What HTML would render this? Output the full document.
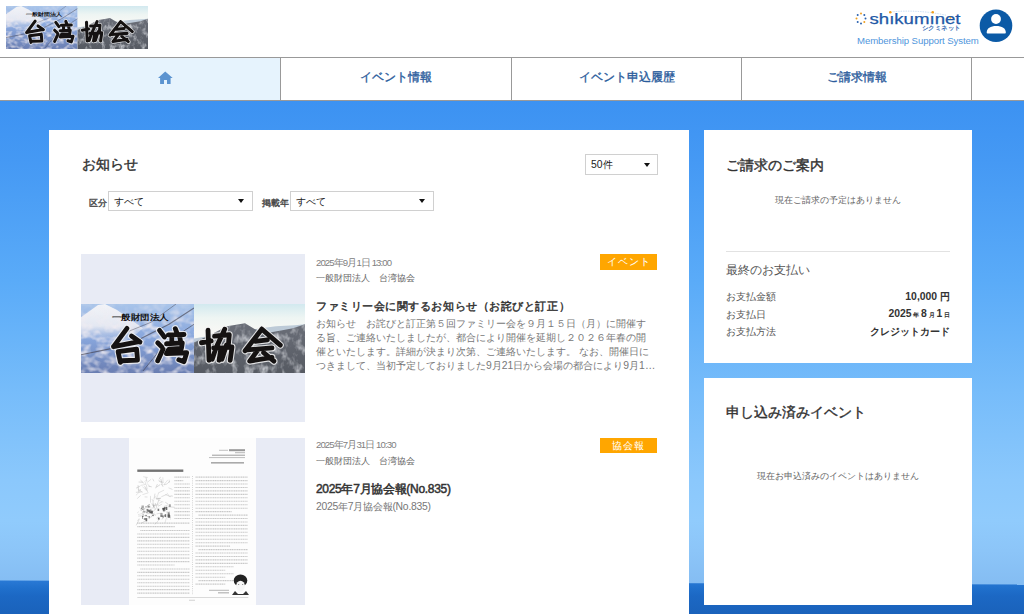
<!DOCTYPE html>
<html lang="ja">
<head>
<meta charset="utf-8">
<style>
*{box-sizing:border-box;margin:0;padding:0}
html,body{width:1024px;height:614px;overflow:hidden}
body{font-family:"Liberation Sans",sans-serif;background:#fff;position:relative;color:#333}
.abs{position:absolute}
#header{left:0;top:0;width:1024px;height:57px;background:#fff}
#nav{left:0;top:57px;width:1024px;height:44px;background:#fff;border-top:1px solid #999999;border-bottom:1px solid #999999}
.navc{position:absolute;top:0;height:42px;border-left:1px solid #999999;text-align:center;color:#2b5c9c;font-size:12px;font-weight:normal;-webkit-text-stroke:0.35px #2b5c9c;line-height:38px}
#bg{left:0;top:101px;width:1024px;height:513px;background:linear-gradient(to bottom,#3c92f2 0px,#4599f4 60px,#5aabf8 180px,#76bcfa 290px,#8bc8fc 380px,#90cbfc 420px,#8cc5f8 450px,#84bcf2 485px)}
#ocean{left:0;top:101px;width:1024px;height:513px;clip-path:polygon(0 479.5px,1024px 483.5px,1024px 513px,0 513px);background:linear-gradient(to bottom,#2a7ad6 479px,#2070cc 487px,#1c68c4 495px,#1a62bb 513px)}
.card{position:absolute;background:#fff}
.h{font-size:13.8px;font-weight:normal;-webkit-text-stroke:0.4px #333;color:#333;position:absolute;white-space:nowrap}
.sel{position:absolute;border:1px solid #d0d0d0;background:#fff;font-size:10.4px;color:#222}
.sel .t{position:absolute;left:5px;top:3px;white-space:nowrap}
.sel .tri{position:absolute;width:0;height:0;border-left:3.5px solid transparent;border-right:3.5px solid transparent;border-top:4px solid #111}
.lbl{position:absolute;font-size:9px;color:#444;font-weight:normal;-webkit-text-stroke:0.35px #444;white-space:nowrap}
.txt{position:absolute;white-space:nowrap}
</style>
</head>
<body>
<div id="header" class="abs">
  <div id="logo" class="abs" style="left:6px;top:6px;width:142px;height:43px;overflow:hidden"><svg width="100%" height="100%" viewBox="0 0 224 68" preserveAspectRatio="none">
<defs>
<linearGradient id="lsky_logo" x1="0" y1="0" x2="0" y2="1"><stop offset="0" stop-color="#a8c4ea"/><stop offset="0.5" stop-color="#88a6dc"/><stop offset="1" stop-color="#6a7eb2"/></linearGradient>
<linearGradient id="fuji_logo" x1="0" y1="0" x2="0" y2="1"><stop offset="0" stop-color="#f2f4f8"/><stop offset="0.6" stop-color="#e4e8f2"/><stop offset="1" stop-color="#c8d2e8" stop-opacity="0"/></linearGradient>
<linearGradient id="bmg_logo" x1="0" y1="0" x2="0" y2="1"><stop offset="0" stop-color="#fff" stop-opacity="0.2"/><stop offset="0.35" stop-color="#fff" stop-opacity="0.9"/><stop offset="1" stop-color="#fff" stop-opacity="0.8"/></linearGradient>
<mask id="bm_logo"><rect x="0" y="0" width="113" height="68" fill="url(#bmg_logo)"/></mask>
<linearGradient id="rsky_logo" x1="0" y1="0" x2="0" y2="1"><stop offset="0" stop-color="#d2e9ef"/><stop offset="0.2" stop-color="#eef5f3"/><stop offset="0.4" stop-color="#f8f8f5"/></linearGradient>
<linearGradient id="mtn_logo" x1="0" y1="0" x2="0" y2="1"><stop offset="0" stop-color="#6a6e78"/><stop offset="1" stop-color="#565a62"/></linearGradient>
<filter id="blos_logo" x="0" y="0" width="100%" height="100%">
<feTurbulence type="fractalNoise" baseFrequency="0.11 0.15" numOctaves="2" seed="7" result="n"/>
<feColorMatrix in="n" type="matrix" values="0 0 0 0 0.88  0 0 0 0 0.84  0 0 0 0 0.88  2.6 0 0 0 -1.05"/>
<feComposite in2="SourceGraphic" operator="in"/>
</filter>
<filter id="rock_logo" x="0" y="0" width="100%" height="100%">
<feTurbulence type="fractalNoise" baseFrequency="0.14 0.1" numOctaves="3" seed="5" result="n"/>
<feColorMatrix in="n" type="matrix" values="0 0 0 0 0.74  0 0 0 0 0.76  0 0 0 0 0.8  2.4 0 0 0 -1.1"/>
<feComposite in2="SourceGraphic" operator="in"/>
</filter>
<clipPath id="mclip_logo"><path d="M113,38 L130,30 L146,22 L158,20 L164,19 L174,25 L186,28.5 L200,26 L212,24 L224,20 L224,68 L113,68 Z"/></clipPath>
</defs>
<rect x="0" y="0" width="113" height="68" fill="url(#lsky_logo)"/>
<path d="M0,13 L17,1 L24,0 L36,6 L62,24 L50,34 L20,36 L0,34 Z" fill="url(#fuji_logo)"/>
<rect x="0" y="0" width="113" height="68" fill="#fff" filter="url(#blos_logo)" mask="url(#bm_logo)"/>
<g stroke="#3e3a44" fill="none" opacity="0.6">
<path d="M113,4 L88,20 L60,34 L30,44 L0,50" stroke-width="1.1"/><path d="M113,20 L85,38 L62,66" stroke-width="0.9"/><path d="M95,0 L70,18 L40,30" stroke-width="0.7"/>
</g>
<rect x="113" y="0" width="111" height="68" fill="url(#rsky_logo)"/>
<path d="M113,34 L125,32 L150,28 L180,24 L195,22 L214,21 L224,20 L224,68 L113,68 Z" fill="#8ea6c0" opacity="0.55"/>
<path d="M113,38 L130,30 L146,22 L158,20 L164,19 L174,25 L186,28.5 L200,26 L212,24 L224,20 L224,68 L113,68 Z" fill="url(#mtn_logo)"/>
<rect x="113" y="0" width="111" height="68" fill="#fff" filter="url(#rock_logo)" clip-path="url(#mclip_logo)" opacity="0.8"/>
<text x="31" y="15.5" font-size="8" font-weight="bold" fill="#111" font-family="Liberation Sans, sans-serif" textLength="57" lengthAdjust="spacingAndGlyphs">一般財団法人</text>
<g fill="none" stroke-linecap="round" stroke-linejoin="round">
<g stroke="#f4f4f4" stroke-width="7" opacity="0.85">
<path d="M46,24 L32.5,42 M32.5,42 L58,37 M50.5,31.5 L59,37.5 M37.2,47.5 L39.4,57.5 M37.2,47 L55.6,44.5 L56.5,55 M40.7,55.9 L56.5,55.3"/>
<path d="M78.5,26 L83.5,32.5 M76.7,38.3 L81,42.5 M76.7,55.9 L82,44.5 M94.3,24.3 L96,28.7 M87.3,30.4 L103,30 M90.8,32.2 L90.8,36.6 M98.7,32.2 L99.6,36.6 M85.5,39.2 L101.3,38.3 L100.5,43.6 M88.1,44.5 L100.5,43.8 M87.3,45.4 L85.5,48.9 L105.7,48 L103,56.8 L97.8,55"/>
<path d="M120.5,38.2 L130.2,36.4 M127,25.7 L128,55.4 M143.7,24.8 L136.3,40.5 M133.5,31.7 L148.3,30.3 L147.4,39.6 M132.6,43.3 L140,43.3 L138.1,55.4 M135.3,42.4 L131.2,54.5 M141.8,43.3 L151,42.4 L149.2,55.4 M145.5,40.5 L140.9,54.5"/>
<path d="M180.8,24.8 L164.1,46.1 M180.8,24.8 L199.3,40.5 M174.3,36.8 L186.4,35.4 M166,45.2 L191,43.3 M177,45.2 L168.7,56.3 L191,52.6 M182.6,48 L192.9,56.3"/>
</g>
<g stroke="#151212" stroke-width="4.8">
<path d="M46,24 L32.5,42 M32.5,42 L58,37 M50.5,31.5 L59,37.5 M37.2,47.5 L39.4,57.5 M37.2,47 L55.6,44.5 L56.5,55 M40.7,55.9 L56.5,55.3"/>
<path d="M78.5,26 L83.5,32.5 M76.7,38.3 L81,42.5 M76.7,55.9 L82,44.5 M94.3,24.3 L96,28.7 M87.3,30.4 L103,30 M90.8,32.2 L90.8,36.6 M98.7,32.2 L99.6,36.6 M85.5,39.2 L101.3,38.3 L100.5,43.6 M88.1,44.5 L100.5,43.8 M87.3,45.4 L85.5,48.9 L105.7,48 L103,56.8 L97.8,55"/>
<path d="M120.5,38.2 L130.2,36.4 M127,25.7 L128,55.4 M143.7,24.8 L136.3,40.5 M133.5,31.7 L148.3,30.3 L147.4,39.6 M132.6,43.3 L140,43.3 L138.1,55.4 M135.3,42.4 L131.2,54.5 M141.8,43.3 L151,42.4 L149.2,55.4 M145.5,40.5 L140.9,54.5"/>
<path d="M180.8,24.8 L164.1,46.1 M180.8,24.8 L199.3,40.5 M174.3,36.8 L186.4,35.4 M166,45.2 L191,43.3 M177,45.2 L168.7,56.3 L191,52.6 M182.6,48 L192.9,56.3"/>
</g>
</g>
</svg></div>
  <svg class="abs" style="left:850px;top:4px" width="120" height="30" viewBox="0 0 120 30">
<g><circle cx="11" cy="9.5" r="1" fill="#f0a020"/><circle cx="14.3" cy="11" r="1" fill="#2b63b0"/><circle cx="15.5" cy="14.5" r="1" fill="#2b63b0"/><circle cx="14.3" cy="18" r="1" fill="#f0a020"/><circle cx="11" cy="19.5" r="1" fill="#2b63b0"/><circle cx="7.7" cy="18" r="1" fill="#2b63b0"/><circle cx="6.5" cy="14.5" r="1" fill="#f0a020"/><circle cx="7.7" cy="11" r="1" fill="#2b63b0"/></g>
<path d="M42.7,7.8 Q70,5.5 96.4,11.3" stroke="#9cc0e8" stroke-width="0.7" stroke-dasharray="0.8 0.9" fill="none"/>
<text x="19.5" y="19.8" font-family="Liberation Sans, sans-serif" font-size="14.5" font-weight="normal" fill="#2158a6" stroke="#2158a6" stroke-width="0.25" stroke-linejoin="round" textLength="91" lengthAdjust="spacingAndGlyphs">sh&#305;kum&#305;net</text>
<circle cx="40.3" cy="8.3" r="1.3" fill="#f0a020"/><circle cx="82.7" cy="8.3" r="1.3" fill="#f0a020"/><circle cx="100.3" cy="13.7" r="0.9" fill="#f0a020"/>
<text x="71.5" y="26.2" font-family="Liberation Sans, sans-serif" font-size="5.5" font-weight="bold" fill="#2b63b0" textLength="39" lengthAdjust="spacingAndGlyphs">シクミネット</text>
</svg>
  <div class="abs" style="left:857px;top:35px;font-size:9.6px;letter-spacing:-0.08px;color:#5096dc;white-space:nowrap">Membership Support System</div>
  <svg class="abs" style="left:978px;top:8px" width="36" height="36" viewBox="0 0 36 36"><circle cx="18" cy="17.7" r="16.3" fill="#0b5aa6"/><circle cx="18" cy="11" r="4.9" fill="#fff"/><path d="M8.7,24.6 C8.7,20.2 12.5,18 18.2,18 C24,18 27.8,20.2 27.8,24.6 L27.8,24.8 Q27.8,25.5 27,25.5 L9.5,25.5 Q8.7,25.5 8.7,24.8 Z" fill="#fff"/></svg>
</div>
<div id="nav" class="abs">
  <div class="navc" style="left:49px;width:231px;background:#e6f3fd"><svg class="abs" style="left:107px;top:11.5px" width="16" height="14" viewBox="0 0 16 14"><path d="M8.25,1.4 L15.7,7.9 L13.6,7.9 L13.6,13.9 L10,13.9 L10,10 L7,10 L7,13.9 L3.1,13.9 L3.1,7.9 L1,7.9 Z" fill="#5b93d0"/></svg></div>
  <div class="navc" style="left:280px;width:231px">イベント情報</div>
  <div class="navc" style="left:511px;width:230px">イベント申込履歴</div>
  <div class="navc" style="left:741px;width:230px">ご請求情報</div>
  <div class="navc" style="left:971px;width:53px"></div>
</div>
<div id="bg" class="abs"></div><div id="ocean" class="abs"></div>

<!-- main card -->
<div class="card" style="left:49px;top:130px;width:640px;height:484px">
  <div class="h" style="left:33px;top:26px">お知らせ</div>
  <div class="sel" style="left:536px;top:24px;width:73px;height:21px"><span class="t">50件</span><span class="tri" style="left:58px;top:8px"></span></div>
  <div class="lbl" style="left:40px;top:67px">区分</div>
  <div class="sel" style="left:59px;top:61px;width:145px;height:20px"><span class="t">すべて</span><span class="tri" style="left:129px;top:7px"></span></div>
  <div class="lbl" style="left:213px;top:67px">掲載年</div>
  <div class="sel" style="left:241px;top:61px;width:144px;height:20px"><span class="t">すべて</span><span class="tri" style="left:128px;top:7px"></span></div>
  <!-- item 1 -->
  <div class="abs" style="left:32px;top:124px;width:224px;height:168px;background:#e8ebf5">
    <div id="banner2" class="abs" style="left:0;top:50px;width:224px;height:69px;overflow:hidden"><svg width="100%" height="100%" viewBox="0 0 224 68" preserveAspectRatio="none">
<defs>
<linearGradient id="lsky_banner2" x1="0" y1="0" x2="0" y2="1"><stop offset="0" stop-color="#a8c4ea"/><stop offset="0.5" stop-color="#88a6dc"/><stop offset="1" stop-color="#6a7eb2"/></linearGradient>
<linearGradient id="fuji_banner2" x1="0" y1="0" x2="0" y2="1"><stop offset="0" stop-color="#f2f4f8"/><stop offset="0.6" stop-color="#e4e8f2"/><stop offset="1" stop-color="#c8d2e8" stop-opacity="0"/></linearGradient>
<linearGradient id="bmg_banner2" x1="0" y1="0" x2="0" y2="1"><stop offset="0" stop-color="#fff" stop-opacity="0.2"/><stop offset="0.35" stop-color="#fff" stop-opacity="0.9"/><stop offset="1" stop-color="#fff" stop-opacity="0.8"/></linearGradient>
<mask id="bm_banner2"><rect x="0" y="0" width="113" height="68" fill="url(#bmg_banner2)"/></mask>
<linearGradient id="rsky_banner2" x1="0" y1="0" x2="0" y2="1"><stop offset="0" stop-color="#d2e9ef"/><stop offset="0.2" stop-color="#eef5f3"/><stop offset="0.4" stop-color="#f8f8f5"/></linearGradient>
<linearGradient id="mtn_banner2" x1="0" y1="0" x2="0" y2="1"><stop offset="0" stop-color="#6a6e78"/><stop offset="1" stop-color="#565a62"/></linearGradient>
<filter id="blos_banner2" x="0" y="0" width="100%" height="100%">
<feTurbulence type="fractalNoise" baseFrequency="0.11 0.15" numOctaves="2" seed="7" result="n"/>
<feColorMatrix in="n" type="matrix" values="0 0 0 0 0.88  0 0 0 0 0.84  0 0 0 0 0.88  2.6 0 0 0 -1.05"/>
<feComposite in2="SourceGraphic" operator="in"/>
</filter>
<filter id="rock_banner2" x="0" y="0" width="100%" height="100%">
<feTurbulence type="fractalNoise" baseFrequency="0.14 0.1" numOctaves="3" seed="5" result="n"/>
<feColorMatrix in="n" type="matrix" values="0 0 0 0 0.74  0 0 0 0 0.76  0 0 0 0 0.8  2.4 0 0 0 -1.1"/>
<feComposite in2="SourceGraphic" operator="in"/>
</filter>
<clipPath id="mclip_banner2"><path d="M113,38 L130,30 L146,22 L158,20 L164,19 L174,25 L186,28.5 L200,26 L212,24 L224,20 L224,68 L113,68 Z"/></clipPath>
</defs>
<rect x="0" y="0" width="113" height="68" fill="url(#lsky_banner2)"/>
<path d="M0,13 L17,1 L24,0 L36,6 L62,24 L50,34 L20,36 L0,34 Z" fill="url(#fuji_banner2)"/>
<rect x="0" y="0" width="113" height="68" fill="#fff" filter="url(#blos_banner2)" mask="url(#bm_banner2)"/>
<g stroke="#3e3a44" fill="none" opacity="0.6">
<path d="M113,4 L88,20 L60,34 L30,44 L0,50" stroke-width="1.1"/><path d="M113,20 L85,38 L62,66" stroke-width="0.9"/><path d="M95,0 L70,18 L40,30" stroke-width="0.7"/>
</g>
<rect x="113" y="0" width="111" height="68" fill="url(#rsky_banner2)"/>
<path d="M113,34 L125,32 L150,28 L180,24 L195,22 L214,21 L224,20 L224,68 L113,68 Z" fill="#8ea6c0" opacity="0.55"/>
<path d="M113,38 L130,30 L146,22 L158,20 L164,19 L174,25 L186,28.5 L200,26 L212,24 L224,20 L224,68 L113,68 Z" fill="url(#mtn_banner2)"/>
<rect x="113" y="0" width="111" height="68" fill="#fff" filter="url(#rock_banner2)" clip-path="url(#mclip_banner2)" opacity="0.8"/>
<text x="31" y="15.5" font-size="8" font-weight="bold" fill="#111" font-family="Liberation Sans, sans-serif" textLength="57" lengthAdjust="spacingAndGlyphs">一般財団法人</text>
<g fill="none" stroke-linecap="round" stroke-linejoin="round">
<g stroke="#f4f4f4" stroke-width="7" opacity="0.85">
<path d="M46,24 L32.5,42 M32.5,42 L58,37 M50.5,31.5 L59,37.5 M37.2,47.5 L39.4,57.5 M37.2,47 L55.6,44.5 L56.5,55 M40.7,55.9 L56.5,55.3"/>
<path d="M78.5,26 L83.5,32.5 M76.7,38.3 L81,42.5 M76.7,55.9 L82,44.5 M94.3,24.3 L96,28.7 M87.3,30.4 L103,30 M90.8,32.2 L90.8,36.6 M98.7,32.2 L99.6,36.6 M85.5,39.2 L101.3,38.3 L100.5,43.6 M88.1,44.5 L100.5,43.8 M87.3,45.4 L85.5,48.9 L105.7,48 L103,56.8 L97.8,55"/>
<path d="M120.5,38.2 L130.2,36.4 M127,25.7 L128,55.4 M143.7,24.8 L136.3,40.5 M133.5,31.7 L148.3,30.3 L147.4,39.6 M132.6,43.3 L140,43.3 L138.1,55.4 M135.3,42.4 L131.2,54.5 M141.8,43.3 L151,42.4 L149.2,55.4 M145.5,40.5 L140.9,54.5"/>
<path d="M180.8,24.8 L164.1,46.1 M180.8,24.8 L199.3,40.5 M174.3,36.8 L186.4,35.4 M166,45.2 L191,43.3 M177,45.2 L168.7,56.3 L191,52.6 M182.6,48 L192.9,56.3"/>
</g>
<g stroke="#151212" stroke-width="4.8">
<path d="M46,24 L32.5,42 M32.5,42 L58,37 M50.5,31.5 L59,37.5 M37.2,47.5 L39.4,57.5 M37.2,47 L55.6,44.5 L56.5,55 M40.7,55.9 L56.5,55.3"/>
<path d="M78.5,26 L83.5,32.5 M76.7,38.3 L81,42.5 M76.7,55.9 L82,44.5 M94.3,24.3 L96,28.7 M87.3,30.4 L103,30 M90.8,32.2 L90.8,36.6 M98.7,32.2 L99.6,36.6 M85.5,39.2 L101.3,38.3 L100.5,43.6 M88.1,44.5 L100.5,43.8 M87.3,45.4 L85.5,48.9 L105.7,48 L103,56.8 L97.8,55"/>
<path d="M120.5,38.2 L130.2,36.4 M127,25.7 L128,55.4 M143.7,24.8 L136.3,40.5 M133.5,31.7 L148.3,30.3 L147.4,39.6 M132.6,43.3 L140,43.3 L138.1,55.4 M135.3,42.4 L131.2,54.5 M141.8,43.3 L151,42.4 L149.2,55.4 M145.5,40.5 L140.9,54.5"/>
<path d="M180.8,24.8 L164.1,46.1 M180.8,24.8 L199.3,40.5 M174.3,36.8 L186.4,35.4 M166,45.2 L191,43.3 M177,45.2 L168.7,56.3 L191,52.6 M182.6,48 L192.9,56.3"/>
</g>
</g>
</svg></div>
  </div>
  <div class="txt" style="left:267px;top:127px;font-size:9.6px;letter-spacing:-0.9px;color:#808080">2025年9月1日 13:00</div>
  <div class="txt" style="left:267px;top:143px;font-size:8.5px;color:#666">一般財団法人　台湾協会</div>
  <div class="txt" style="left:267px;top:169px;font-size:11.4px;letter-spacing:0.55px;color:#333;font-weight:normal;-webkit-text-stroke:0.45px #333">ファミリー会に関するお知らせ（お詫びと訂正）</div>
  <div class="abs" style="left:267px;top:187px;width:360px;font-size:10.4px;line-height:14px;color:#777;white-space:nowrap">お知らせ　お詫びと訂正第５回ファミリー会を９月１５日（月）に開催す<br>る旨、ご連絡いたしましたが、都合により開催を延期し２０２６年春の開<br>催といたします。詳細が決まり次第、ご連絡いたします。 なお、開催日に<br>つきまして、当初予定しておりました9月21日から会場の都合により9月1…</div>
  <div class="abs" style="left:551px;top:124px;width:57px;height:16px;background:#ffa600;color:#fff;font-size:9.6px;line-height:16px;text-align:center;letter-spacing:1px">イベント</div>
  <!-- item 2 -->
  <div class="abs" style="left:32px;top:308px;width:224px;height:167px;background:#e8ebf5">
    <div id="paper" class="abs" style="left:48px;top:0;width:127px;height:167px;overflow:hidden"><svg width="127" height="167" viewBox="0 0 127 167">
<rect width="127" height="167" fill="#fdfdfd"/>
<rect x="100" y="11.2" width="16" height="2" fill="#555" opacity="0.6"/><rect x="90" y="11.8" width="9" height="1" fill="#888" opacity="0.5"/>
<rect x="106.0" y="14.2" width="10.0" height="1.0" fill="#999" opacity="0.7"/>
<rect x="83.0" y="16.6" width="33.0" height="1.3" fill="#777" opacity="0.55"/>
<rect x="80.0" y="19.0" width="36.0" height="1.1" fill="#888" opacity="0.5"/>
<rect x="82.0" y="24.0" width="33.0" height="1.6" fill="#666" opacity="0.55"/>
<rect x="8.3" y="31.5" width="46.0" height="2.4" fill="#444" opacity="0.75"/>
<g>
<line x1="23.9" y1="62.6" x2="24.6" y2="69.2" stroke="#888" stroke-width="0.5" opacity="0.50"/>
<line x1="28.4" y1="46.1" x2="26.6" y2="50.3" stroke="#888" stroke-width="0.5" opacity="0.59"/>
<line x1="12.1" y1="51.3" x2="10.1" y2="52.7" stroke="#888" stroke-width="0.5" opacity="0.56"/>
<line x1="10.4" y1="81.2" x2="7.2" y2="87.3" stroke="#888" stroke-width="0.5" opacity="0.53"/>
<line x1="14.2" y1="38.7" x2="18.8" y2="39.5" stroke="#888" stroke-width="0.5" opacity="0.41"/>
<line x1="17.0" y1="39.3" x2="17.8" y2="43.6" stroke="#888" stroke-width="0.5" opacity="0.60"/>
<line x1="26.1" y1="66.2" x2="23.9" y2="70.1" stroke="#888" stroke-width="0.5" opacity="0.49"/>
<line x1="18.2" y1="81.9" x2="12.1" y2="85.3" stroke="#888" stroke-width="0.5" opacity="0.56"/>
<line x1="19.4" y1="48.1" x2="22.8" y2="48.9" stroke="#888" stroke-width="0.5" opacity="0.58"/>
<line x1="22.2" y1="75.2" x2="18.3" y2="75.8" stroke="#888" stroke-width="0.5" opacity="0.60"/>
<line x1="9.0" y1="47.2" x2="9.6" y2="53.7" stroke="#888" stroke-width="0.5" opacity="0.64"/>
<line x1="22.1" y1="41.2" x2="18.2" y2="44.5" stroke="#888" stroke-width="0.5" opacity="0.43"/>
<line x1="11.9" y1="52.6" x2="6.9" y2="57.3" stroke="#888" stroke-width="0.5" opacity="0.39"/>
<line x1="17.1" y1="42.4" x2="15.3" y2="43.8" stroke="#888" stroke-width="0.5" opacity="0.40"/>
<line x1="27.5" y1="57.7" x2="25.5" y2="59.9" stroke="#888" stroke-width="0.5" opacity="0.39"/>
<line x1="30.2" y1="43.1" x2="33.5" y2="45.7" stroke="#888" stroke-width="0.5" opacity="0.43"/>
<line x1="41.0" y1="73.4" x2="37.7" y2="74.6" stroke="#888" stroke-width="0.5" opacity="0.41"/>
<line x1="22.0" y1="75.6" x2="27.0" y2="77.2" stroke="#888" stroke-width="0.5" opacity="0.65"/>
<line x1="16.0" y1="49.4" x2="19.0" y2="54.4" stroke="#888" stroke-width="0.5" opacity="0.44"/>
<line x1="11.4" y1="42.0" x2="15.0" y2="45.4" stroke="#888" stroke-width="0.5" opacity="0.53"/>
<line x1="21.3" y1="57.9" x2="21.6" y2="64.7" stroke="#888" stroke-width="0.5" opacity="0.52"/>
<line x1="37.6" y1="46.0" x2="34.9" y2="46.8" stroke="#888" stroke-width="0.5" opacity="0.60"/>
<line x1="17.2" y1="46.4" x2="11.6" y2="47.4" stroke="#888" stroke-width="0.5" opacity="0.41"/>
<line x1="40.4" y1="76.8" x2="41.6" y2="81.7" stroke="#888" stroke-width="0.5" opacity="0.38"/>
<line x1="10.3" y1="80.4" x2="8.4" y2="82.9" stroke="#888" stroke-width="0.5" opacity="0.43"/>
<line x1="36.2" y1="64.2" x2="39.1" y2="66.1" stroke="#888" stroke-width="0.5" opacity="0.57"/>
<line x1="11.3" y1="48.0" x2="7.0" y2="50.2" stroke="#888" stroke-width="0.5" opacity="0.53"/>
<line x1="18.2" y1="78.4" x2="21.3" y2="78.5" stroke="#888" stroke-width="0.5" opacity="0.43"/>
<line x1="23.7" y1="40.7" x2="24.9" y2="43.3" stroke="#888" stroke-width="0.5" opacity="0.52"/>
<line x1="13.3" y1="53.9" x2="6.9" y2="54.3" stroke="#888" stroke-width="0.5" opacity="0.55"/>
<line x1="31.8" y1="63.7" x2="34.5" y2="64.0" stroke="#888" stroke-width="0.5" opacity="0.36"/>
<line x1="39.0" y1="68.8" x2="45.8" y2="69.3" stroke="#888" stroke-width="0.5" opacity="0.54"/>
<line x1="24.9" y1="70.1" x2="21.3" y2="70.1" stroke="#888" stroke-width="0.5" opacity="0.37"/>
<line x1="27.0" y1="70.4" x2="22.6" y2="75.2" stroke="#888" stroke-width="0.5" opacity="0.56"/>
<line x1="35.2" y1="78.3" x2="33.1" y2="81.4" stroke="#888" stroke-width="0.5" opacity="0.62"/>
<line x1="37.7" y1="56.4" x2="32.3" y2="58.8" stroke="#888" stroke-width="0.5" opacity="0.52"/>
<line x1="29.6" y1="54.8" x2="28.0" y2="59.5" stroke="#888" stroke-width="0.5" opacity="0.37"/>
<line x1="30.1" y1="81.7" x2="25.9" y2="86.5" stroke="#888" stroke-width="0.5" opacity="0.47"/>
<line x1="33.3" y1="63.6" x2="29.6" y2="65.6" stroke="#888" stroke-width="0.5" opacity="0.38"/>
<line x1="33.8" y1="39.3" x2="34.1" y2="44.3" stroke="#888" stroke-width="0.5" opacity="0.42"/>
<line x1="32.0" y1="59.9" x2="27.1" y2="61.1" stroke="#888" stroke-width="0.5" opacity="0.43"/>
<line x1="9.4" y1="51.2" x2="13.7" y2="54.4" stroke="#888" stroke-width="0.5" opacity="0.40"/>
<line x1="38.9" y1="67.0" x2="34.9" y2="68.4" stroke="#888" stroke-width="0.5" opacity="0.45"/>
<line x1="31.0" y1="46.7" x2="27.6" y2="49.1" stroke="#888" stroke-width="0.5" opacity="0.62"/>
<line x1="38.0" y1="54.9" x2="40.7" y2="59.0" stroke="#888" stroke-width="0.5" opacity="0.39"/>
<line x1="25.4" y1="74.8" x2="21.5" y2="79.8" stroke="#888" stroke-width="0.5" opacity="0.64"/>
<line x1="18.1" y1="45.4" x2="20.9" y2="48.7" stroke="#888" stroke-width="0.5" opacity="0.41"/>
<line x1="22.7" y1="65.5" x2="25.1" y2="69.3" stroke="#888" stroke-width="0.5" opacity="0.60"/>
<line x1="41.4" y1="57.9" x2="43.8" y2="58.1" stroke="#888" stroke-width="0.5" opacity="0.61"/>
<line x1="10.4" y1="69.2" x2="13.1" y2="73.2" stroke="#888" stroke-width="0.5" opacity="0.59"/>
<line x1="9.6" y1="44.0" x2="13.9" y2="44.3" stroke="#888" stroke-width="0.5" opacity="0.60"/>
<line x1="16.8" y1="44.2" x2="16.0" y2="46.3" stroke="#888" stroke-width="0.5" opacity="0.48"/>
<line x1="29.8" y1="66.8" x2="23.8" y2="67.6" stroke="#888" stroke-width="0.5" opacity="0.56"/>
<line x1="15.6" y1="58.9" x2="18.5" y2="59.0" stroke="#888" stroke-width="0.5" opacity="0.49"/>
<line x1="32.6" y1="45.9" x2="34.1" y2="48.9" stroke="#888" stroke-width="0.5" opacity="0.56"/>
<line x1="26.2" y1="65.0" x2="28.1" y2="70.5" stroke="#888" stroke-width="0.5" opacity="0.59"/>
<line x1="38.9" y1="41.8" x2="34.6" y2="46.9" stroke="#888" stroke-width="0.5" opacity="0.39"/>
<line x1="24.0" y1="65.5" x2="26.4" y2="71.6" stroke="#888" stroke-width="0.5" opacity="0.52"/>
<line x1="38.0" y1="73.1" x2="38.8" y2="79.7" stroke="#888" stroke-width="0.5" opacity="0.55"/>
<line x1="15.8" y1="69.8" x2="13.1" y2="75.3" stroke="#888" stroke-width="0.5" opacity="0.57"/>
<line x1="16.0" y1="77.6" x2="9.2" y2="78.1" stroke="#888" stroke-width="0.5" opacity="0.51"/>
<line x1="35.1" y1="52.1" x2="29.2" y2="55.0" stroke="#888" stroke-width="0.5" opacity="0.45"/>
<line x1="11.7" y1="57.4" x2="8.2" y2="60.6" stroke="#888" stroke-width="0.5" opacity="0.50"/>
<line x1="9.9" y1="73.6" x2="8.1" y2="75.0" stroke="#888" stroke-width="0.5" opacity="0.40"/>
<line x1="20.1" y1="72.7" x2="22.5" y2="73.9" stroke="#888" stroke-width="0.5" opacity="0.50"/>
<line x1="32.9" y1="75.0" x2="27.5" y2="75.9" stroke="#888" stroke-width="0.5" opacity="0.50"/>
<line x1="40.3" y1="41.8" x2="40.1" y2="44.9" stroke="#888" stroke-width="0.5" opacity="0.44"/>
<line x1="33.1" y1="66.1" x2="29.0" y2="68.3" stroke="#888" stroke-width="0.5" opacity="0.52"/>
<line x1="19.3" y1="54.8" x2="13.4" y2="56.7" stroke="#888" stroke-width="0.5" opacity="0.41"/>
<line x1="37.1" y1="80.6" x2="36.0" y2="85.1" stroke="#888" stroke-width="0.5" opacity="0.41"/>
<line x1="26.7" y1="60.1" x2="31.7" y2="60.6" stroke="#888" stroke-width="0.5" opacity="0.64"/>
<line x1="26.0" y1="55.6" x2="24.9" y2="61.5" stroke="#888" stroke-width="0.5" opacity="0.50"/>
<line x1="31.8" y1="40.9" x2="33.1" y2="45.4" stroke="#888" stroke-width="0.5" opacity="0.64"/>
<line x1="39.5" y1="49.8" x2="43.5" y2="51.5" stroke="#888" stroke-width="0.5" opacity="0.48"/>
<line x1="35.9" y1="77.6" x2="38.3" y2="81.3" stroke="#888" stroke-width="0.5" opacity="0.41"/>
<line x1="29.4" y1="78.7" x2="27.4" y2="80.4" stroke="#888" stroke-width="0.5" opacity="0.36"/>
<line x1="15.4" y1="48.0" x2="18.3" y2="52.6" stroke="#888" stroke-width="0.5" opacity="0.46"/>
<line x1="29.5" y1="42.6" x2="34.7" y2="44.7" stroke="#888" stroke-width="0.5" opacity="0.50"/>
<line x1="17.3" y1="46.7" x2="18.2" y2="51.3" stroke="#888" stroke-width="0.5" opacity="0.46"/>
<line x1="22.6" y1="61.3" x2="24.9" y2="63.0" stroke="#888" stroke-width="0.5" opacity="0.54"/>
<line x1="30.1" y1="61.3" x2="27.9" y2="67.2" stroke="#888" stroke-width="0.5" opacity="0.61"/>
<line x1="16.7" y1="70.6" x2="10.9" y2="72.4" stroke="#888" stroke-width="0.5" opacity="0.44"/>
<line x1="19.4" y1="78.6" x2="16.3" y2="78.6" stroke="#888" stroke-width="0.5" opacity="0.62"/>
<line x1="13.4" y1="48.5" x2="17.3" y2="52.6" stroke="#888" stroke-width="0.5" opacity="0.38"/>
<line x1="36.5" y1="56.6" x2="42.0" y2="58.8" stroke="#888" stroke-width="0.5" opacity="0.47"/>
<line x1="31.6" y1="38.8" x2="30.0" y2="41.3" stroke="#888" stroke-width="0.5" opacity="0.62"/>
<line x1="41.0" y1="43.1" x2="37.7" y2="46.2" stroke="#888" stroke-width="0.5" opacity="0.50"/>
<line x1="31.6" y1="46.3" x2="33.9" y2="47.1" stroke="#888" stroke-width="0.5" opacity="0.36"/>
<line x1="27.2" y1="60.7" x2="31.5" y2="62.8" stroke="#888" stroke-width="0.5" opacity="0.41"/>
<line x1="15.7" y1="75.0" x2="9.0" y2="76.6" stroke="#888" stroke-width="0.5" opacity="0.38"/>
<rect x="13.6" y="76.2" width="1.0" height="1.0" fill="#333" opacity="0.51"/>
<rect x="34.2" y="72.5" width="2.0" height="0.8" fill="#333" opacity="0.63"/>
<rect x="14.2" y="72.8" width="2.3" height="1.8" fill="#333" opacity="0.43"/>
<rect x="13.1" y="77.9" width="1.4" height="1.0" fill="#333" opacity="0.69"/>
<rect x="34.8" y="68.9" width="2.0" height="1.7" fill="#333" opacity="0.65"/>
<rect x="38.9" y="77.2" width="2.4" height="2.8" fill="#333" opacity="0.51"/>
<rect x="38.6" y="76.4" width="2.3" height="2.7" fill="#333" opacity="0.51"/>
<rect x="12.8" y="71.1" width="1.7" height="0.8" fill="#333" opacity="0.49"/>
<rect x="14.8" y="80.2" width="2.1" height="1.6" fill="#333" opacity="0.61"/>
<rect x="18.4" y="71.8" width="2.8" height="2.4" fill="#333" opacity="0.63"/>
<rect x="39.8" y="66.3" width="2.0" height="2.6" fill="#333" opacity="0.45"/>
<rect x="34.1" y="77.4" width="2.1" height="0.8" fill="#333" opacity="0.45"/>
<rect x="38.9" y="74.3" width="1.8" height="3.2" fill="#333" opacity="0.58"/>
<rect x="19.7" y="78.1" width="1.0" height="2.3" fill="#333" opacity="0.65"/>
<rect x="16.6" y="80.1" width="1.6" height="3.2" fill="#333" opacity="0.69"/>
<rect x="17.2" y="73.4" width="1.4" height="1.8" fill="#333" opacity="0.47"/>
<rect x="33.8" y="70.0" width="2.7" height="2.5" fill="#333" opacity="0.65"/>
<rect x="12.2" y="69.7" width="0.9" height="1.2" fill="#333" opacity="0.65"/>
<rect x="28.6" y="70.7" width="1.6" height="2.3" fill="#333" opacity="0.64"/>
<rect x="28.9" y="79.6" width="1.7" height="2.0" fill="#333" opacity="0.74"/>
<rect x="12.5" y="67.5" width="2.4" height="3.1" fill="#333" opacity="0.41"/>
<rect x="19.2" y="67.7" width="2.0" height="1.9" fill="#333" opacity="0.43"/>
<rect x="16.3" y="68.3" width="1.5" height="1.1" fill="#333" opacity="0.52"/>
<rect x="35.7" y="76.2" width="1.5" height="2.7" fill="#333" opacity="0.68"/>
<rect x="23.4" y="77.0" width="1.3" height="1.1" fill="#333" opacity="0.71"/>
<rect x="31.3" y="75.1" width="2.3" height="2.5" fill="#333" opacity="0.43"/>
<rect x="37.0" y="68.8" width="1.3" height="3.2" fill="#333" opacity="0.72"/>
<rect x="19.5" y="66.1" width="1.3" height="0.9" fill="#333" opacity="0.37"/>
<rect x="18.5" y="67.1" width="1.0" height="2.5" fill="#333" opacity="0.57"/>
<rect x="33.8" y="71.3" width="1.5" height="2.0" fill="#333" opacity="0.40"/>
<rect x="21.6" y="72.7" width="2.4" height="2.9" fill="#333" opacity="0.66"/>
<rect x="33.1" y="69.9" width="2.4" height="1.7" fill="#333" opacity="0.61"/>
<rect x="31.5" y="77.4" width="2.5" height="1.3" fill="#333" opacity="0.61"/>
<rect x="17.5" y="70.9" width="1.9" height="1.9" fill="#333" opacity="0.58"/>
<rect x="31.6" y="77.6" width="1.0" height="1.3" fill="#333" opacity="0.61"/>
<rect x="20.3" y="73.4" width="2.3" height="1.6" fill="#333" opacity="0.70"/>
<rect x="16.3" y="76.9" width="1.5" height="1.1" fill="#333" opacity="0.63"/>
<rect x="33.3" y="78.0" width="1.4" height="1.6" fill="#333" opacity="0.51"/>
<rect x="13.0" y="78.4" width="0.8" height="2.5" fill="#333" opacity="0.58"/>
<rect x="20.9" y="71.5" width="1.6" height="1.2" fill="#333" opacity="0.59"/>
</g>
<line x1="45.4" y1="39.1" x2="60.8" y2="39.1" stroke="#8a8a8a" stroke-width="1.1" stroke-dasharray="1.3 0.45" opacity="0.45"/>
<line x1="45.4" y1="42.6" x2="54.4" y2="42.6" stroke="#8a8a8a" stroke-width="1.1" stroke-dasharray="1.3 0.45" opacity="0.45"/>
<line x1="45.4" y1="46.0" x2="60.8" y2="46.0" stroke="#8a8a8a" stroke-width="1.1" stroke-dasharray="1.3 0.45" opacity="0.45"/>
<line x1="45.4" y1="49.5" x2="60.8" y2="49.5" stroke="#8a8a8a" stroke-width="1.1" stroke-dasharray="1.3 0.45" opacity="0.45"/>
<line x1="45.4" y1="52.9" x2="60.8" y2="52.9" stroke="#8a8a8a" stroke-width="1.1" stroke-dasharray="1.3 0.45" opacity="0.45"/>
<line x1="45.4" y1="56.4" x2="60.8" y2="56.4" stroke="#8a8a8a" stroke-width="1.1" stroke-dasharray="1.3 0.45" opacity="0.45"/>
<line x1="45.4" y1="59.8" x2="60.8" y2="59.8" stroke="#8a8a8a" stroke-width="1.1" stroke-dasharray="1.3 0.45" opacity="0.45"/>
<line x1="45.4" y1="63.3" x2="60.8" y2="63.3" stroke="#8a8a8a" stroke-width="1.1" stroke-dasharray="1.3 0.45" opacity="0.45"/>
<line x1="45.4" y1="66.7" x2="60.8" y2="66.7" stroke="#8a8a8a" stroke-width="1.1" stroke-dasharray="1.3 0.45" opacity="0.45"/>
<line x1="45.4" y1="70.2" x2="60.8" y2="70.2" stroke="#8a8a8a" stroke-width="1.1" stroke-dasharray="1.3 0.45" opacity="0.45"/>
<line x1="45.4" y1="73.6" x2="60.8" y2="73.6" stroke="#8a8a8a" stroke-width="1.1" stroke-dasharray="1.3 0.45" opacity="0.45"/>
<line x1="45.4" y1="77.1" x2="60.8" y2="77.1" stroke="#8a8a8a" stroke-width="1.1" stroke-dasharray="1.3 0.45" opacity="0.45"/>
<line x1="45.4" y1="80.5" x2="60.8" y2="80.5" stroke="#8a8a8a" stroke-width="1.1" stroke-dasharray="1.3 0.45" opacity="0.45"/>
<line x1="8.3" y1="85.1" x2="60.8" y2="85.1" stroke="#8a8a8a" stroke-width="1.1" stroke-dasharray="1.3 0.45" opacity="0.45"/>
<line x1="8.3" y1="88.6" x2="45.8" y2="88.6" stroke="#8a8a8a" stroke-width="1.1" stroke-dasharray="1.3 0.45" opacity="0.45"/>
<line x1="11.3" y1="92.5" x2="60.8" y2="92.5" stroke="#8a8a8a" stroke-width="1.1" stroke-dasharray="1.3 0.45" opacity="0.45"/>
<line x1="8.3" y1="96.0" x2="60.8" y2="96.0" stroke="#8a8a8a" stroke-width="1.1" stroke-dasharray="1.3 0.45" opacity="0.45"/>
<line x1="8.3" y1="99.4" x2="60.8" y2="99.4" stroke="#8a8a8a" stroke-width="1.1" stroke-dasharray="1.3 0.45" opacity="0.45"/>
<line x1="8.3" y1="102.9" x2="60.8" y2="102.9" stroke="#8a8a8a" stroke-width="1.1" stroke-dasharray="1.3 0.45" opacity="0.45"/>
<line x1="8.3" y1="106.3" x2="60.8" y2="106.3" stroke="#8a8a8a" stroke-width="1.1" stroke-dasharray="1.3 0.45" opacity="0.45"/>
<line x1="8.3" y1="109.8" x2="60.8" y2="109.8" stroke="#8a8a8a" stroke-width="1.1" stroke-dasharray="1.3 0.45" opacity="0.45"/>
<line x1="8.3" y1="113.2" x2="60.8" y2="113.2" stroke="#8a8a8a" stroke-width="1.1" stroke-dasharray="1.3 0.45" opacity="0.45"/>
<line x1="8.3" y1="116.7" x2="60.8" y2="116.7" stroke="#8a8a8a" stroke-width="1.1" stroke-dasharray="1.3 0.45" opacity="0.45"/>
<line x1="8.3" y1="120.1" x2="60.8" y2="120.1" stroke="#8a8a8a" stroke-width="1.1" stroke-dasharray="1.3 0.45" opacity="0.45"/>
<line x1="8.3" y1="123.6" x2="60.8" y2="123.6" stroke="#8a8a8a" stroke-width="1.1" stroke-dasharray="1.3 0.45" opacity="0.45"/>
<line x1="8.3" y1="127.0" x2="45.6" y2="127.0" stroke="#8a8a8a" stroke-width="1.1" stroke-dasharray="1.3 0.45" opacity="0.45"/>
<line x1="11.3" y1="131.0" x2="60.8" y2="131.0" stroke="#8a8a8a" stroke-width="1.1" stroke-dasharray="1.3 0.45" opacity="0.45"/>
<line x1="8.3" y1="134.4" x2="60.8" y2="134.4" stroke="#8a8a8a" stroke-width="1.1" stroke-dasharray="1.3 0.45" opacity="0.45"/>
<line x1="8.3" y1="137.8" x2="60.8" y2="137.8" stroke="#8a8a8a" stroke-width="1.1" stroke-dasharray="1.3 0.45" opacity="0.45"/>
<line x1="8.3" y1="141.3" x2="60.8" y2="141.3" stroke="#8a8a8a" stroke-width="1.1" stroke-dasharray="1.3 0.45" opacity="0.45"/>
<line x1="8.3" y1="144.7" x2="60.8" y2="144.7" stroke="#8a8a8a" stroke-width="1.1" stroke-dasharray="1.3 0.45" opacity="0.45"/>
<line x1="8.3" y1="148.2" x2="60.8" y2="148.2" stroke="#8a8a8a" stroke-width="1.1" stroke-dasharray="1.3 0.45" opacity="0.45"/>
<line x1="8.3" y1="151.6" x2="60.8" y2="151.6" stroke="#8a8a8a" stroke-width="1.1" stroke-dasharray="1.3 0.45" opacity="0.45"/>
<line x1="8.3" y1="155.1" x2="60.8" y2="155.1" stroke="#8a8a8a" stroke-width="1.1" stroke-dasharray="1.3 0.45" opacity="0.45"/>
<line x1="63.5" y1="38" x2="63.5" y2="157" stroke="#aaa" stroke-width="0.5" stroke-dasharray="1 1.2"/>
<line x1="66.5" y1="39.1" x2="119.0" y2="39.1" stroke="#8a8a8a" stroke-width="1.1" stroke-dasharray="1.3 0.45" opacity="0.45"/>
<line x1="66.5" y1="42.6" x2="119.0" y2="42.6" stroke="#8a8a8a" stroke-width="1.1" stroke-dasharray="1.3 0.45" opacity="0.45"/>
<line x1="66.5" y1="46.0" x2="119.0" y2="46.0" stroke="#8a8a8a" stroke-width="1.1" stroke-dasharray="1.3 0.45" opacity="0.45"/>
<line x1="66.5" y1="49.5" x2="119.0" y2="49.5" stroke="#8a8a8a" stroke-width="1.1" stroke-dasharray="1.3 0.45" opacity="0.45"/>
<line x1="66.5" y1="52.9" x2="119.0" y2="52.9" stroke="#8a8a8a" stroke-width="1.1" stroke-dasharray="1.3 0.45" opacity="0.45"/>
<line x1="66.5" y1="56.4" x2="119.0" y2="56.4" stroke="#8a8a8a" stroke-width="1.1" stroke-dasharray="1.3 0.45" opacity="0.45"/>
<line x1="66.5" y1="59.8" x2="119.0" y2="59.8" stroke="#8a8a8a" stroke-width="1.1" stroke-dasharray="1.3 0.45" opacity="0.45"/>
<line x1="66.5" y1="63.3" x2="119.0" y2="63.3" stroke="#8a8a8a" stroke-width="1.1" stroke-dasharray="1.3 0.45" opacity="0.45"/>
<line x1="66.5" y1="66.7" x2="119.0" y2="66.7" stroke="#8a8a8a" stroke-width="1.1" stroke-dasharray="1.3 0.45" opacity="0.45"/>
<line x1="66.5" y1="70.2" x2="119.0" y2="70.2" stroke="#8a8a8a" stroke-width="1.1" stroke-dasharray="1.3 0.45" opacity="0.45"/>
<line x1="66.5" y1="73.6" x2="102.6" y2="73.6" stroke="#8a8a8a" stroke-width="1.1" stroke-dasharray="1.3 0.45" opacity="0.45"/>
<line x1="69.5" y1="77.1" x2="119.0" y2="77.1" stroke="#8a8a8a" stroke-width="1.1" stroke-dasharray="1.3 0.45" opacity="0.45"/>
<line x1="66.5" y1="80.5" x2="119.0" y2="80.5" stroke="#8a8a8a" stroke-width="1.1" stroke-dasharray="1.3 0.45" opacity="0.45"/>
<line x1="66.5" y1="84.0" x2="119.0" y2="84.0" stroke="#8a8a8a" stroke-width="1.1" stroke-dasharray="1.3 0.45" opacity="0.45"/>
<line x1="66.5" y1="87.4" x2="119.0" y2="87.4" stroke="#8a8a8a" stroke-width="1.1" stroke-dasharray="1.3 0.45" opacity="0.45"/>
<line x1="66.5" y1="90.9" x2="119.0" y2="90.9" stroke="#8a8a8a" stroke-width="1.1" stroke-dasharray="1.3 0.45" opacity="0.45"/>
<line x1="66.5" y1="94.3" x2="119.0" y2="94.3" stroke="#8a8a8a" stroke-width="1.1" stroke-dasharray="1.3 0.45" opacity="0.45"/>
<line x1="66.5" y1="97.8" x2="119.0" y2="97.8" stroke="#8a8a8a" stroke-width="1.1" stroke-dasharray="1.3 0.45" opacity="0.45"/>
<line x1="66.5" y1="101.2" x2="119.0" y2="101.2" stroke="#8a8a8a" stroke-width="1.1" stroke-dasharray="1.3 0.45" opacity="0.45"/>
<line x1="66.5" y1="104.7" x2="119.0" y2="104.7" stroke="#8a8a8a" stroke-width="1.1" stroke-dasharray="1.3 0.45" opacity="0.45"/>
<line x1="66.5" y1="108.1" x2="101.1" y2="108.1" stroke="#8a8a8a" stroke-width="1.1" stroke-dasharray="1.3 0.45" opacity="0.45"/>
<line x1="69.5" y1="111.6" x2="119.0" y2="111.6" stroke="#8a8a8a" stroke-width="1.1" stroke-dasharray="1.3 0.45" opacity="0.45"/>
<line x1="66.5" y1="115.0" x2="119.0" y2="115.0" stroke="#8a8a8a" stroke-width="1.1" stroke-dasharray="1.3 0.45" opacity="0.45"/>
<line x1="66.5" y1="118.5" x2="119.0" y2="118.5" stroke="#8a8a8a" stroke-width="1.1" stroke-dasharray="1.3 0.45" opacity="0.45"/>
<line x1="66.5" y1="121.9" x2="119.0" y2="121.9" stroke="#8a8a8a" stroke-width="1.1" stroke-dasharray="1.3 0.45" opacity="0.45"/>
<line x1="66.5" y1="125.4" x2="119.0" y2="125.4" stroke="#8a8a8a" stroke-width="1.1" stroke-dasharray="1.3 0.45" opacity="0.45"/>
<line x1="66.5" y1="128.8" x2="104.5" y2="128.8" stroke="#8a8a8a" stroke-width="1.1" stroke-dasharray="1.3 0.45" opacity="0.45"/>
<line x1="66.5" y1="132.3" x2="96.5" y2="132.3" stroke="#8a8a8a" stroke-width="1.1" stroke-dasharray="1.3 0.45" opacity="0.45"/>
<line x1="66.5" y1="135.7" x2="104.5" y2="135.7" stroke="#8a8a8a" stroke-width="1.1" stroke-dasharray="1.3 0.45" opacity="0.45"/>
<line x1="66.5" y1="139.2" x2="96.5" y2="139.2" stroke="#8a8a8a" stroke-width="1.1" stroke-dasharray="1.3 0.45" opacity="0.45"/>
<line x1="69.5" y1="142.6" x2="104.5" y2="142.6" stroke="#8a8a8a" stroke-width="1.1" stroke-dasharray="1.3 0.45" opacity="0.45"/>
<line x1="66.5" y1="146.1" x2="96.5" y2="146.1" stroke="#8a8a8a" stroke-width="1.1" stroke-dasharray="1.3 0.45" opacity="0.45"/>
<g>
<ellipse cx="111.5" cy="142.5" rx="6.8" ry="6" fill="#222"/>
<ellipse cx="111.5" cy="148" rx="4.4" ry="5.2" fill="#f6f6f6"/><rect x="109" y="146" width="1.2" height="0.6" fill="#555"/><rect x="113" y="146" width="1.2" height="0.6" fill="#555"/>
<path d="M103,157 L106,153 L109,156 L114,156 L117,153 L120,157 Z" fill="#333"/>
</g>
<rect x="80.0" y="151.8" width="20.0" height="1.0" fill="#999" opacity="0.7"/>
<rect x="89.0" y="154.2" width="11.0" height="1.2" fill="#777" opacity="0.55"/>
<rect x="8.3" y="159.3" width="111.0" height="0.6" fill="#bbb" opacity="0.9"/>
<rect x="60.0" y="161.8" width="6.0" height="0.8" fill="#bbb" opacity="0.8"/>
</svg></div>
  </div>
  <div class="txt" style="left:267px;top:309px;font-size:9.6px;letter-spacing:-0.9px;color:#808080">2025年7月31日 10:30</div>
  <div class="txt" style="left:267px;top:326px;font-size:8.5px;color:#666">一般財団法人　台湾協会</div>
  <div class="txt" style="left:267px;top:351px;font-size:12px;letter-spacing:-0.3px;color:#333;font-weight:normal;-webkit-text-stroke:0.5px #333">2025年7月協会報(No.835)</div>
  <div class="txt" style="left:267px;top:370px;font-size:10.4px;letter-spacing:-0.25px;color:#777">2025年7月協会報(No.835)</div>
  <div class="abs" style="left:551px;top:308px;width:57px;height:15px;background:#ffa600;color:#fff;font-size:9.6px;line-height:15px;text-align:center;letter-spacing:1px">協会報</div>
</div>


<!-- right cards -->
<div class="card" style="left:704px;top:130px;width:268px;height:233px">
  <div class="h" style="left:22px;top:27px">ご請求のご案内</div>
  <div class="txt" style="left:0;width:268px;text-align:center;top:64px;font-size:9px;color:#666">現在ご請求の予定はありません</div>
  <div class="abs" style="left:22px;top:121px;width:224px;height:1px;background:#e2e2e2"></div>
  <div class="txt" style="left:22px;top:133px;font-size:11.6px;color:#555">最終のお支払い</div>
  <div class="txt" style="left:22px;top:160px;font-size:10.4px;color:#555">お支払金額</div>
  <div class="txt" style="right:22px;top:160px;font-size:10.4px;color:#333;font-weight:bold">10,000 円</div>
  <div class="txt" style="left:22px;top:178px;font-size:10.4px;color:#555">お支払日</div>
  <div class="txt" style="right:22px;top:178px;font-size:10.4px;color:#333;font-weight:bold">2025<span style="font-size:6.4px"> 年 </span>8<span style="font-size:6.4px"> 月 </span>1<span style="font-size:6.4px"> 日</span></div>
  <div class="txt" style="left:22px;top:195px;font-size:10.4px;color:#555">お支払方法</div>
  <div class="txt" style="right:22px;top:195px;font-size:10.4px;color:#333;font-weight:bold">クレジットカード</div>
</div>
<div class="card" style="left:704px;top:378px;width:268px;height:227px">
  <div class="h" style="left:22px;top:26px">申し込み済みイベント</div>
  <div class="txt" style="left:0;width:268px;text-align:center;top:92px;font-size:9.2px;color:#666">現在お申込済みのイベントはありません</div>
</div>
</body>
</html>
